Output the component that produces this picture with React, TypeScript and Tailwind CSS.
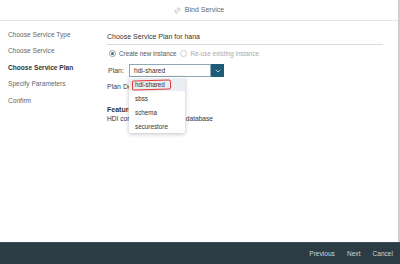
import { Link2, ChevronDown } from "lucide-react"

const steps = [
  { title: "Choose Service Type", active: false },
  { title: "Choose Service", active: false },
  { title: "Choose Service Plan", active: true },
  { title: "Specify Parameters", active: false },
  { title: "Confirm", active: false },
]

const plans = ["hdi-shared", "sbss", "schema", "securestore"]

export default function App() {
  return (
    <div
      className="w-[400px] h-[264px] flex flex-col bg-white text-[#333] overflow-hidden"
      style={{ fontFamily: '"Liberation Sans", Arial, sans-serif' }}
    >
      <div className="flex flex-1 min-h-0 border-r-2 border-[#cfcfcf]">
        <div className="flex flex-col flex-1 min-w-0">
          {/* header */}
          <div className="h-[21px] flex items-center justify-center gap-[4px] border-b border-[#e6e6e6] text-[7px] text-[#666]">
            <Link2 className="w-[7px] h-[7px] -rotate-45 text-[#999]" strokeWidth={2} />
            Bind Service
          </div>

          <div className="flex flex-1">
            {/* steps */}
            <ul className="w-[100px] pl-[8px] pt-[10px] flex flex-col gap-[8.4px]">
              {steps.map((s) => (
                <li
                  key={s.title}
                  className={
                    s.active
                      ? "text-[6.6px] leading-[8px] font-bold text-[#333]"
                      : "text-[6.6px] leading-[8px] text-[#666]"
                  }
                >
                  {s.title}
                </li>
              ))}
            </ul>

            {/* content */}
            <div className="flex-1 pl-[7px] pr-[15px] pt-[11px]">
              <div className="text-[7px] leading-[9px] text-[#333] pb-[3px] border-b border-[#dcdcdc]">
                Choose Service Plan for hana
              </div>

              <div className="flex items-center mt-[4px] text-[6.3px] text-[#555]">
                <span className="w-[7px] h-[7px] ml-[2px] rounded-full border border-[#999] flex items-center justify-center">
                  <span className="w-[3px] h-[3px] rounded-full bg-[#4a6c80]" />
                </span>
                <span className="ml-[3px]">Create new instance</span>
                <span className="w-[7px] h-[7px] ml-[4px] rounded-full border border-[#ccc]" />
                <span className="ml-[3px] text-[#aaa]">Re-use existing instance</span>
              </div>

              <div className="flex items-center mt-[6px] text-[7px]">
                <span className="w-[22px] text-[#444] pl-[1px]">Plan:</span>
                <div className="relative flex">
                  <div className="w-[82px] h-[13px] border border-[#8fa8b6] bg-white flex items-center pl-[4px] text-[6.6px] text-[#333]">
                    hdi-shared
                  </div>
                  <div className="w-[13px] h-[13px] bg-[#1f5c7a] flex items-center justify-center">
                    <ChevronDown className="w-[8px] h-[8px] text-white" strokeWidth={2} />
                  </div>

                  {/* dropdown */}
                  <div className="absolute left-0 top-[13px] w-[56px] pt-[1px] bg-white rounded-b-[2px] shadow-[0_1px_4px_rgba(0,0,0,0.25)] z-10 flex flex-col text-[6.3px] text-[#333]">
                    {plans.map((p, i) => (
                      <div
                        key={p}
                        className={
                          i === 0
                            ? "relative h-[13px] flex items-center pl-[6px] bg-[#e8eef3]"
                            : "h-[14px] flex items-center pl-[6px]"
                        }
                      >
                        {p}
                        {i === 0 && (
                          <span className="absolute left-[3px] top-[2px] w-[39px] h-[10px] border border-[#e53935] rounded-[2px] -rotate-2" />
                        )}
                      </div>
                    ))}
                  </div>
                </div>
              </div>

              <div className="mt-[5px] text-[7px] text-[#444]">Plan Description</div>
              <div className="mt-[12px] text-[7px] leading-[9px] font-bold text-[#333]">Features</div>
              <div className="text-[6.6px] leading-[9px] text-[#333]">HDI container on a shared database</div>
            </div>
          </div>
        </div>
      </div>

      {/* footer */}
      <div className="h-[22px] bg-[#2b3c45] border-t border-[#3b4f5a] flex items-center justify-end gap-[12px] pr-[7px] text-[6.6px] text-[#c9d6de]">
        <span>Previous</span>
        <span>Next</span>
        <span>Cancel</span>
      </div>
    </div>
  )
}
